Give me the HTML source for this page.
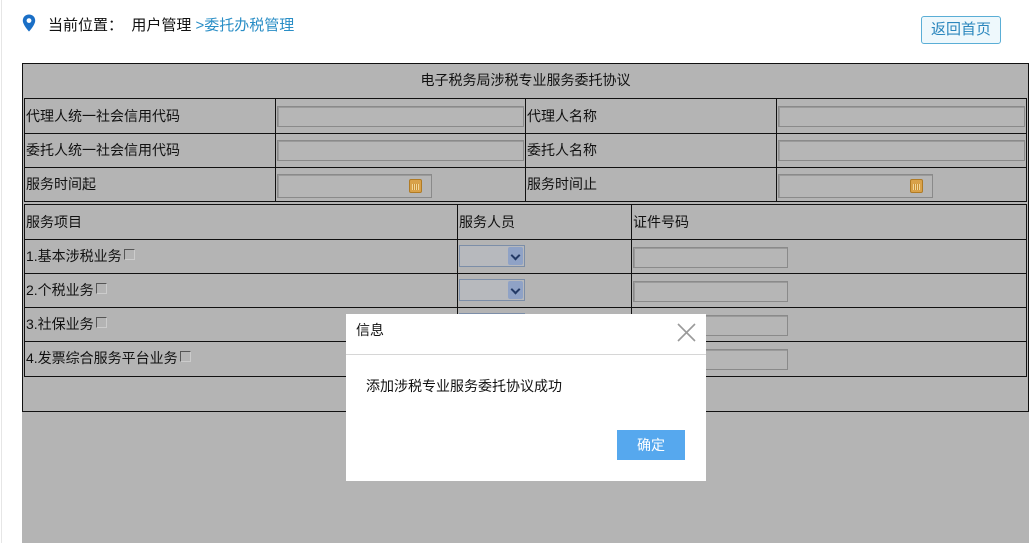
<!DOCTYPE html>
<html><head><meta charset="utf-8"><style>
*{margin:0;padding:0;box-sizing:border-box}
body{width:1033px;height:543px;background:#fff;position:relative;overflow:hidden;font-family:"Liberation Sans","Noto Sans CJK SC",sans-serif;font-size:14px;color:#111}
.a{position:absolute}
.t{position:absolute;white-space:nowrap;line-height:16px}
.h{position:absolute;height:1px;background:#111}
.v{position:absolute;width:1px;background:#111}
.inp{position:absolute;border:1px solid #8a8a8a;background:#b6b6b6;box-shadow:inset 1px 1px 0 #9a9a9a}
.cal{position:absolute;width:13px;height:14px;background:#d9a24a;border:1px solid #b07b25;border-radius:2px}
.cal:after{content:"";position:absolute;left:2px;top:4px;width:7px;height:6px;background:repeating-linear-gradient(90deg,#f3d79a 0 1px,transparent 1px 2px),#c98f34}
.sel{position:absolute;width:66px;height:22px;border:1px solid #7c8ea8;background:#b7b9bd}
.sel i{position:absolute;right:1px;top:1px;width:15px;height:18px;background:#8fa2c6;border-radius:2px}
.sel i:after{content:"";position:absolute;left:4px;top:5px;width:5px;height:5px;border-right:2px solid #233a66;border-bottom:2px solid #233a66;transform:rotate(45deg)}
.cb{position:absolute;width:11px;height:11px;border-left:1px solid #555;border-top:1px solid #555;border-right:1px solid #ccc;border-bottom:1px solid #ccc}
</style></head><body>
<div class="a" style="left:1px;top:0;width:1px;height:543px;background:#e6e6e6"></div>
<svg class="a" style="left:22px;top:14px" width="14" height="18" viewBox="0 0 14 18"><path d="M7 0.5C3.4 0.5 0.8 3.2 0.8 6.6 0.8 11 7 17.5 7 17.5S13.2 11 13.2 6.6C13.2 3.2 10.6 0.5 7 0.5Z" fill="#1a6fc6"/><circle cx="7" cy="6.6" r="2.4" fill="#fff"/></svg>
<div class="t" style="left:48px;top:18px;font-size:15px">当前位置：&nbsp; 用户管理 <span style="color:#2a8ec6">&gt;委托办税管理</span></div>
<div class="a" style="left:921px;top:16px;width:80px;height:28px;border:1px solid #5aaed6;border-radius:3px;background:#eef8fc;color:#2a86bd;font-size:15px;text-align:center;line-height:26px">返回首页</div>

<div class="a" style="left:22px;top:63px;width:1007px;height:480px;background:#b4b4b4"></div>
<div class="a" style="left:22px;top:63px;width:1007px;height:349px;border:1px solid #111"></div>
<div class="t" style="left:22px;width:1007px;text-align:center;top:72px">电子税务局涉税专业服务委托协议</div>

<div class="a" style="left:24px;top:98px;width:1003px;height:104px;border:1px solid #111"></div>
<div class="h" style="left:24px;top:133px;width:1003px"></div>
<div class="h" style="left:24px;top:167px;width:1003px"></div>
<div class="v" style="left:275px;top:98px;height:104px"></div>
<div class="v" style="left:525px;top:98px;height:104px"></div>
<div class="v" style="left:776px;top:98px;height:104px"></div>
<div class="t" style="left:26px;top:108px">代理人统一社会信用代码</div>
<div class="t" style="left:26px;top:142px">委托人统一社会信用代码</div>
<div class="t" style="left:26px;top:176px">服务时间起</div>
<div class="t" style="left:527px;top:108px">代理人名称</div>
<div class="t" style="left:527px;top:142px">委托人名称</div>
<div class="t" style="left:527px;top:176px">服务时间止</div>
<div class="inp" style="left:277px;top:106px;width:247px;height:21px"></div>
<div class="inp" style="left:277px;top:140px;width:247px;height:21px"></div>
<div class="inp" style="left:778px;top:106px;width:247px;height:21px"></div>
<div class="inp" style="left:778px;top:140px;width:247px;height:21px"></div>
<div class="inp" style="left:277px;top:174px;width:155px;height:24px"></div>
<div class="inp" style="left:778px;top:174px;width:155px;height:24px"></div>
<div class="cal" style="left:409px;top:179px"></div>
<div class="cal" style="left:910px;top:179px"></div>

<div class="a" style="left:24px;top:204px;width:1003px;height:173px;border:1px solid #111"></div>
<div class="h" style="left:24px;top:239px;width:1003px"></div>
<div class="h" style="left:24px;top:273px;width:1003px"></div>
<div class="h" style="left:24px;top:307px;width:1003px"></div>
<div class="h" style="left:24px;top:341px;width:1003px"></div>
<div class="v" style="left:457px;top:204px;height:173px"></div>
<div class="v" style="left:631px;top:204px;height:173px"></div>
<div class="t" style="left:26px;top:214px">服务项目</div>
<div class="t" style="left:459px;top:214px">服务人员</div>
<div class="t" style="left:633px;top:214px">证件号码</div>
<div class="t" style="left:26px;top:248px">1.基本涉税业务</div><div class="cb" style="left:124px;top:249px"></div>
<div class="t" style="left:26px;top:282px">2.个税业务</div><div class="cb" style="left:96px;top:283px"></div>
<div class="t" style="left:26px;top:316px">3.社保业务</div><div class="cb" style="left:96px;top:317px"></div>
<div class="t" style="left:26px;top:350px">4.发票综合服务平台业务</div><div class="cb" style="left:180px;top:351px"></div>
<div class="sel" style="left:459px;top:245px"><i></i></div>
<div class="sel" style="left:459px;top:279px"><i></i></div>
<div class="sel" style="left:459px;top:313px"><i></i></div>
<div class="inp" style="left:633px;top:247px;width:155px;height:21px"></div>
<div class="inp" style="left:633px;top:281px;width:155px;height:21px"></div>
<div class="inp" style="left:633px;top:315px;width:155px;height:21px"></div>
<div class="inp" style="left:633px;top:349px;width:155px;height:21px"></div>

<div class="a" style="left:346px;top:314px;width:360px;height:167px;background:#fff"></div>
<div class="t" style="left:356px;top:322px">信息</div>
<svg class="a" style="left:677px;top:323px" width="19" height="19" viewBox="0 0 19 19"><path d="M1 1L18 18M18 1L1 18" stroke="#9a9a9a" stroke-width="1.6"/></svg>
<div class="a" style="left:346px;top:354px;width:360px;height:1px;background:#d6d6d6"></div>
<div class="t" style="left:366px;top:378px">添加涉税专业服务委托协议成功</div>
<div class="a" style="left:617px;top:430px;width:68px;height:30px;background:#56a8ee;color:#fff;text-align:center;line-height:30px">确定</div>
</body></html>
